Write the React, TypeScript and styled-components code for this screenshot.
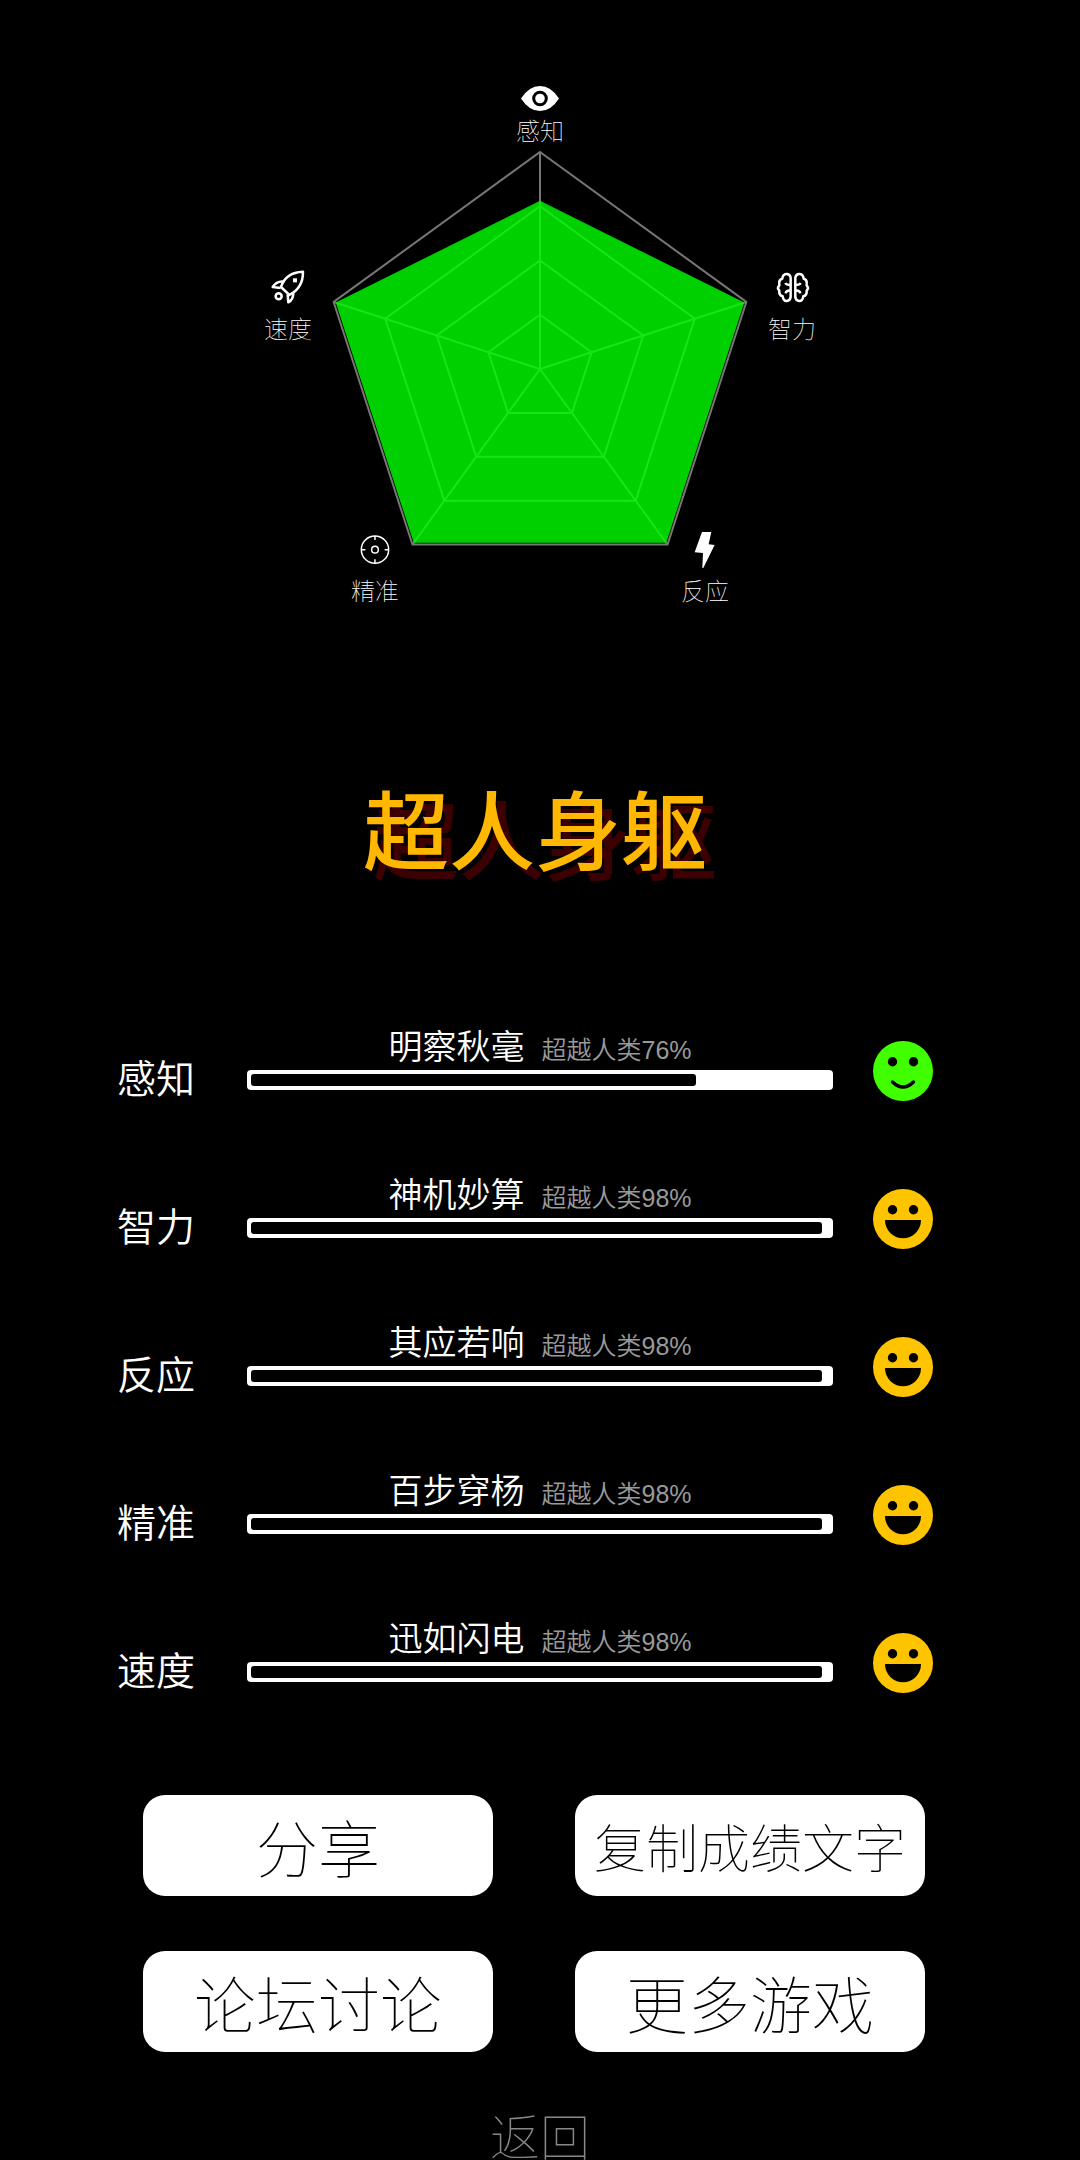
import React from 'react';
import styled, { createGlobalStyle } from 'styled-components';

const GlobalStyle = createGlobalStyle`
  body {
    margin: 0;
    background: #000;
    color: #fff;
    font-family: "Noto Sans CJK SC", sans-serif;
  }
`;

const Page = styled.main`
  box-sizing: border-box;
  min-height: 100vh;
  padding-top: 70px;
  display: flex;
  flex-direction: column;
`;

const Chart = styled.svg`
  display: block;
  width: 600px;
  height: 540px;
  flex: none;
  align-self: center;
`;

const AxisLabel = styled.text`
  fill: #fff;
  font-size: 24px;
  font-weight: 100;
  text-anchor: middle;
`;

const Title = styled.h1`
  margin: 167px 0 0;
  padding-right: 10px;
  font-size: 86px;
  line-height: 100px;
  font-weight: 500;
  text-align: center;
  color: #ffb700;
  text-shadow: 10px 10px 0 #3c0000;
`;

const Scores = styled.section`
  display: flex;
  flex-direction: column;
  gap: 72px;
  margin-top: 148px;
  padding: 0 147px 0 117px;
`;

const Row = styled.div`
  display: grid;
  grid-template-columns: 90px 1fr 60px;
  column-gap: 40px;
  align-items: end;
`;

const RowLabel = styled.div`
  padding-bottom: 5px;
  font-size: 39px;
  line-height: 40px;
  font-weight: 350;
`;

const Meter = styled.div`
  padding-bottom: 11px;
`;

const Caption = styled.div`
  display: flex;
  justify-content: center;
  align-items: baseline;
  gap: 17px;
  margin-bottom: 5px;
`;

const Rank = styled.span`
  font-size: 34px;
  line-height: 40px;
  font-weight: 350;
`;

const Percent = styled.span`
  font-family: "Liberation Sans", "Noto Sans CJK SC", sans-serif;
  font-size: 25px;
  line-height: 30px;
  font-weight: 350;
  color: #999;
`;

const Track = styled.div`
  box-sizing: border-box;
  height: 20px;
  padding: 4px;
  border-radius: 4px;
  background: #fff;
`;

const Fill = styled.div`
  height: 100%;
  border-radius: 3px;
  background: #000;
`;

const Face = styled.svg`
  display: block;
  width: 60px;
  height: 60px;
`;

const Actions = styled.nav`
  display: grid;
  grid-template-columns: 1fr 1fr;
  gap: 55px 82px;
  margin-top: 102px;
  padding: 0 155px 0 143px;
`;

const ActionButton = styled.button<{ $compact?: boolean }>`
  height: 101px;
  padding: 0;
  border: 0;
  border-radius: 22px;
  background: #fff;
  color: #000;
  font-family: inherit;
  font-size: ${(p) => (p.$compact ? 52 : 62)}px;
  font-weight: 100;
  white-space: nowrap;
  cursor: pointer;
`;

const BackButton = styled.button`
  align-self: center;
  flex: none;
  margin-top: 56px;
  padding: 0;
  border: 0;
  background: none;
  color: #888;
  font-family: inherit;
  font-size: 50px;
  line-height: 52px;
  font-weight: 100;
  cursor: pointer;
`;

const CENTER = { x: 300, y: 299 };
const RADIUS = 217;

// Vertices go clockwise from the top axis.
const vertex = (axis: number, ratio: number): [number, number] => {
  const angle = (axis * 2 * Math.PI) / 5 - Math.PI / 2;
  return [
    CENTER.x + RADIUS * ratio * Math.cos(angle),
    CENTER.y + RADIUS * ratio * Math.sin(angle),
  ];
};

const polygon = (ratios: number[]) =>
  ratios.map((r, i) => vertex(i, r).join(',')).join(' ');

const scores = [
  { name: '感知', rank: '明察秋毫', percent: 76, fill: 77, radar: 0.775 },
  { name: '智力', rank: '神机妙算', percent: 98, fill: 98.8, radar: 0.99 },
  { name: '反应', rank: '其应若响', percent: 98, fill: 98.8, radar: 0.99 },
  { name: '精准', rank: '百步穿杨', percent: 98, fill: 98.8, radar: 0.99 },
  { name: '速度', rank: '迅如闪电', percent: 98, fill: 98.8, radar: 0.99 },
];

const labelSpots = [
  { x: 300, y: 70 },
  { x: 552, y: 268 },
  { x: 465, y: 530 },
  { x: 135, y: 530 },
  { x: 48, y: 268 },
];

function Radar() {
  return (
    <Chart viewBox="0 0 600 540" role="img" aria-label="能力雷达图">
      <g fill="none" stroke="#777" strokeWidth="2">
        {[0.25, 0.5, 0.75, 1].map((r) => (
          <polygon key={r} points={polygon([r, r, r, r, r])} />
        ))}
        {scores.map((s, i) => {
          const [x, y] = vertex(i, 1);
          return <line key={s.name} x1={CENTER.x} y1={CENTER.y} x2={x} y2={y} />;
        })}
      </g>
      <polygon points={polygon(scores.map((s) => s.radar))} fill="#00ff00" fillOpacity="0.81" />

      {/* eye */}
      <path
        d="M281 28.500 Q289 16 300 16 Q311 16 319 28.500 Q311 41 300 41 Q289 41 281 28.500Z"
        fill="#fff"
      />
      <circle cx="300" cy="28.500" r="6.300" fill="#fff" stroke="#000" strokeWidth="3" />

      {/* brain */}
      <g transform="translate(530 195) scale(0.333)" fill="none" stroke="#fff" strokeWidth="7.500" strokeLinejoin="round">
        <path d="M62 38Q60 26 49 27Q38 28 37 41Q26 43 28 57Q29 61 26 64Q21 71 28 77Q26 91 38 94Q40 108 50 108Q61 107 62 96Z" />
        <path d="M46 54Q49 60 62 60M62 77Q48 76 47 85" />
        <path d="M76 38Q78 26 89 27Q100 28 101 41Q112 43 110 57Q109 61 112 64Q117 71 110 77Q112 91 100 94Q98 108 88 108Q77 107 76 96Z" />
        <path d="M92 54Q89 60 76 60M76 77Q90 76 91 85" />
      </g>

      {/* lightning */}
      <path
        transform="translate(442 457) scale(0.333)"
        d="M60 15H88L80 52L98 54L64 123H61L63 78L38 76Z"
        fill="#fff"
      />

      {/* crosshair */}
      <g transform="translate(112 457) scale(0.333)" fill="none" stroke="#fff" strokeWidth="4.500">
        <circle cx="69" cy="68" r="41" />
        <circle cx="69" cy="68" r="10" />
        <path d="M69 27V39M69 97V109M28 68H40M98 68H110" />
      </g>

      {/* rocket */}
      <g transform="translate(25 195) scale(0.333)" fill="none" stroke="#fff" strokeWidth="7.500" strokeLinejoin="round">
        <path d="M48 66Q62 22 114 20Q115 68 73 90Z" />
        <path d="M58 50Q36 46 23 66L47 69" />
        <path d="M68 88L70 112Q86 104 85 82" />
        <circle cx="41" cy="94" r="9" />
        <rect x="84" y="40" width="12" height="12" fill="#fff" stroke="none" />
      </g>

      {scores.map((s, i) => (
        <AxisLabel key={s.name} x={labelSpots[i].x} y={labelSpots[i].y}>
          {s.name}
        </AxisLabel>
      ))}
    </Chart>
  );
}

function Mood({ great }: { great: boolean }) {
  return (
    <Face viewBox="-30 -30 60 60" aria-hidden="true">
      <circle r="30" fill={great ? '#ffc400' : '#40ff00'} />
      <circle cx="-10.500" cy="-9.300" r="4.700" />
      <circle cx="10.500" cy="-9.300" r="4.700" />
      {great ? (
        <path d="M-18 1H18A18 18.300 0 0 1 -18 1Z" />
      ) : (
        <path d="M-10.500 11Q0 21 10.500 11" fill="none" stroke="#000" strokeWidth="3.500" strokeLinecap="round" />
      )}
    </Face>
  );
}

export default function App() {
  return (
    <>
      <GlobalStyle />
      <Page>
        <Radar />
        <Title>超人身躯</Title>
        <Scores>
          {scores.map((s) => (
            <Row key={s.name}>
              <RowLabel>{s.name}</RowLabel>
              <Meter>
                <Caption>
                  <Rank>{s.rank}</Rank>
                  <Percent>超越人类{s.percent}%</Percent>
                </Caption>
                <Track role="meter" aria-label={s.name} aria-valuemin={0} aria-valuemax={100} aria-valuenow={s.percent}>
                  <Fill style={{ width: `${s.fill}%` }} />
                </Track>
              </Meter>
              <Mood great={s.percent > 90} />
            </Row>
          ))}
        </Scores>
        <Actions>
          <ActionButton type="button">分享</ActionButton>
          <ActionButton type="button" $compact>复制成绩文字</ActionButton>
          <ActionButton type="button">论坛讨论</ActionButton>
          <ActionButton type="button">更多游戏</ActionButton>
        </Actions>
        <BackButton type="button">返回</BackButton>
      </Page>
    </>
  );
}
